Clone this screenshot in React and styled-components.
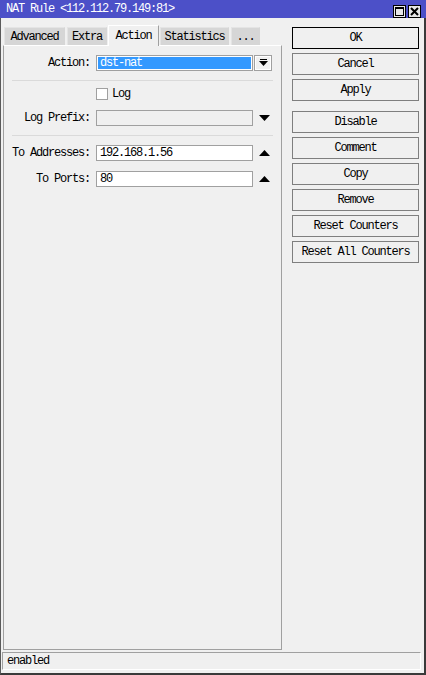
import React from 'react';
import styled, { createGlobalStyle } from 'styled-components';

const Global = createGlobalStyle`
    html, body { margin: 0; padding: 0; background: #f0f0f0; }
    * { box-sizing: border-box; }
    body {
        font-family: "Liberation Mono", "DejaVu Sans Mono", monospace;
        font-size: 12px;
        letter-spacing: -1.2px;
        color: #000;
    }
`;

const Window = styled.div`
    width: 426px;
    height: 675px;
    display: flex;
    flex-direction: column;
    background: #f0f0f0;
    border-left: 1px solid #5a5a5a;
    border-right: 2px solid #3a3a3a;
    border-bottom: 2px solid #3a3a3a;
`;

const TitleBar = styled.div`
    height: 18px;
    margin: 0 -2px 0 -1px;
    background: #4c50c8;
    color: #fff;
    display: flex;
    align-items: center;
    justify-content: space-between;
    padding: 0 5px 0 6px;
`;

const TitleText = styled.span`
    line-height: 18px;
`;

const TitleButtons = styled.div`
    display: flex;
    gap: 2px;
    margin-top: 4px;
`;

const TitleButton = styled.div`
    width: 13px;
    height: 13px;
    background: #e8e8e8;
    border: 1px solid #000;
    display: flex;
    align-items: center;
    justify-content: center;
`;

const Main = styled.div`
    flex: 1;
    display: flex;
    padding-left: 2px;
    min-height: 0;
`;

const LeftArea = styled.div`
    width: 279px;
    display: flex;
    flex-direction: column;
    padding-top: 6px;
`;

const Tabs = styled.div`
    display: flex;
    align-items: flex-end;
    height: 21px;
    padding-left: 1px;
`;

const Tab = styled.div`
    width: ${p => p.w}px;
    height: ${p => (p.active ? 21 : 18)}px;
    margin-right: ${p => p.gap ?? 2}px;
    margin-bottom: ${p => (p.active ? -1 : 0)}px;
    background: ${p => (p.active ? '#f0f0f0' : '#d6d6d6')};
    border-top: 1px solid ${p => (p.active ? '#ffffff' : '#e4e4e4')};
    border-left: 1px solid ${p => (p.active ? '#ffffff' : '#e4e4e4')};
    border-right: 1px solid ${p => (p.active ? '#a0a0a0' : '#d6d6d6')};
    position: relative;
    z-index: ${p => (p.active ? 2 : 1)};
    display: flex;
    align-items: center;
    justify-content: center;
    line-height: 1;
    padding-top: ${p => (p.active ? 0 : 1)}px;
`;

const Panel = styled.div`
    flex: 1;
    border-top: 1px solid #ffffff;
    border-left: 1px solid #a0a0a0;
    border-right: 1px solid #a0a0a0;
    border-bottom: 1px solid #a0a0a0;
    padding-top: 9px;
    display: flex;
    flex-direction: column;
`;

const Row = styled.div`
    display: flex;
    align-items: center;
    height: ${p => p.h || 16}px;
    margin-top: ${p => p.mt || 0}px;
`;

const Label = styled.div`
    width: 86px;
    text-align: right;
    margin-right: 6px;
    white-space: nowrap;
`;

const Field = styled.div`
    width: 157px;
    height: 16px;
    border: 1px solid #a0a0a0;
    background: ${p => (p.selected ? '#3399ff' : p.disabled ? '#f0f0f0' : '#ffffff')};
    box-shadow: ${p => (p.selected ? 'inset 0 0 0 1px #ffffff' : 'none')};
    color: ${p => (p.selected ? '#ffffff' : '#000')};
    padding-left: 3px;
    line-height: 14px;
    white-space: nowrap;
`;

const DropButton = styled.div`
    width: 18px;
    height: 16px;
    margin-left: 1px;
    border: 1px solid #a0a0a0;
    box-shadow: inset 0 0 0 1px #ffffff;
    background: #f0f0f0;
    display: flex;
    align-items: center;
    justify-content: center;
`;

const Arrow = styled.div`
    width: 18px;
    margin-left: 2px;
    display: flex;
    align-items: center;
    justify-content: center;
`;

const Separator = styled.div`
    height: 1px;
    background: #dadada;
    margin: ${p => p.m || '9px 8px 7px 8px'};
`;

const CheckBox = styled.div`
    width: 12px;
    height: 12px;
    border: 1px solid #a0a0a0;
    background: #ffffff;
    margin-left: 92px;
    margin-right: 4px;
`;

const RightColumn = styled.div`
    width: 127px;
    margin-left: 10px;
    padding-top: 9px;
    display: flex;
    flex-direction: column;
`;

const Button = styled.div`
    height: 22px;
    border: 1px solid ${p => (p.focused ? '#000000' : '#7f7f7f')};
    background: #f0f0f0;
    display: flex;
    align-items: center;
    justify-content: center;
    margin-bottom: ${p => p.mb ?? 4}px;
    white-space: nowrap;
`;

const StatusBar = styled.div`
    height: 18px;
    margin: 2px 3px 3px 1px;
    border-top: 1px solid #a0a0a0;
    border-left: 1px solid #a0a0a0;
    border-bottom: 1px solid #ffffff;
    border-right: 1px solid #ffffff;
    padding-left: 4px;
    display: flex;
    align-items: center;
`;

const DropIcon = () => (
    <svg width="9" height="8" viewBox="0 0 9 8">
        <rect x="1" y="0" width="7" height="1" fill="#000" />
        <polygon points="0,2 9,2 4.5,7" fill="#000" />
    </svg>
);

const TriDown = () => (
    <svg width="11" height="6" viewBox="0 0 11 6">
        <polygon points="0,0 11,0 5.5,6" fill="#000" />
    </svg>
);

const TriUp = () => (
    <svg width="11" height="6" viewBox="0 0 11 6">
        <polygon points="0,6 11,6 5.5,0" fill="#000" />
    </svg>
);

const tabs = [
    { name: 'Advanced', w: 61 },
    { name: 'Extra', w: 40, gap: 1 },
    { name: 'Action', w: 51, active: true, gap: 1 },
    { name: 'Statistics', w: 69 },
    { name: '...', w: 29 },
];

const buttons = [
    { name: 'OK', focused: true },
    { name: 'Cancel' },
    { name: 'Apply', mb: 10 },
    { name: 'Disable' },
    { name: 'Comment' },
    { name: 'Copy' },
    { name: 'Remove' },
    { name: 'Reset Counters' },
    { name: 'Reset All Counters' },
];

export default function App() {
    return (
        <>
            <Global />
            <Window>
                <TitleBar>
                    <TitleText>NAT Rule &lt;112.112.79.149:81&gt;</TitleText>
                    <TitleButtons>
                        <TitleButton>
                            <svg width="9" height="9" viewBox="0 0 9 9">
                                <rect x="0.5" y="0.5" width="8" height="8" fill="none" stroke="#000" />
                                <rect x="0" y="0" width="9" height="2" fill="#000" />
                            </svg>
                        </TitleButton>
                        <TitleButton>
                            <svg width="9" height="9" viewBox="0 0 9 9">
                                <path d="M1 1 L8 8 M8 1 L1 8" stroke="#000" strokeWidth="2" />
                            </svg>
                        </TitleButton>
                    </TitleButtons>
                </TitleBar>
                <Main>
                    <LeftArea>
                        <Tabs>
                            {tabs.map(t => (
                                <Tab key={t.name} w={t.w} active={t.active} gap={t.gap}>
                                    {t.name}
                                </Tab>
                            ))}
                        </Tabs>
                        <Panel>
                            <Row>
                                <Label>Action:</Label>
                                <Field selected>dst-nat</Field>
                                <DropButton>
                                    <DropIcon />
                                </DropButton>
                            </Row>
                            <Separator />
                            <Row h={12}>
                                <CheckBox />
                                <span>Log</span>
                            </Row>
                            <Row mt={10}>
                                <Label>Log Prefix:</Label>
                                <Field disabled />
                                <Arrow>
                                    <TriDown />
                                </Arrow>
                            </Row>
                            <Separator m="9px 8px 9px 8px" />
                            <Row>
                                <Label>To Addresses:</Label>
                                <Field>192.168.1.56</Field>
                                <Arrow>
                                    <TriUp />
                                </Arrow>
                            </Row>
                            <Row mt={10}>
                                <Label>To Ports:</Label>
                                <Field>80</Field>
                                <Arrow>
                                    <TriUp />
                                </Arrow>
                            </Row>
                        </Panel>
                    </LeftArea>
                    <RightColumn>
                        {buttons.map(b => (
                            <Button key={b.name} focused={b.focused} mb={b.mb}>
                                {b.name}
                            </Button>
                        ))}
                    </RightColumn>
                </Main>
                <StatusBar>enabled</StatusBar>
            </Window>
        </>
    );
}
